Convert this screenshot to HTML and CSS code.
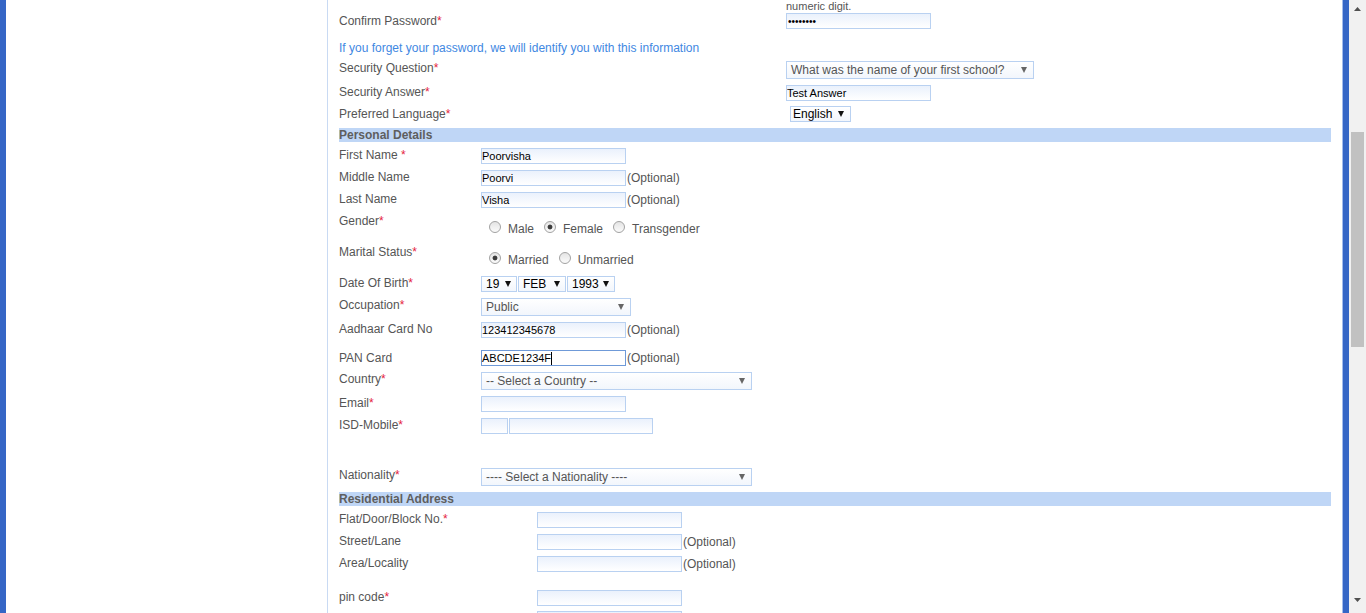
FILE: index.html
```html
<!DOCTYPE html>
<html lang="en">
<head>
<meta charset="utf-8">
<title>Registration</title>
<link rel="stylesheet" href="styles.css">
</head>
<body>
<div class="page">
  <div class="edge-left"></div>
  <div class="main">
    <div class="panel">
      <div class="sec sec-top">
        <div class="row h10"><div class="lbl"></div><div class="hint">numeric digit.</div></div>
        <div class="row h27"><div class="lbl">Confirm Password<span class="req">*</span></div><div class="ctl m3"><input class="txt pwd" type="password" value="12345678"></div></div>
        <div class="row h20"><div class="info">If you forget your password, we will identify you with this information</div></div>
        <div class="row h24"><div class="lbl">Security Question<span class="req">*</span></div><div class="ctl m4"><div class="sel w-secq"><span>What was the name of your first school?</span><i class="arr"></i></div></div></div>
        <div class="row h22"><div class="lbl">Security Answer<span class="req">*</span></div><div class="ctl m4"><input class="txt" value="Test Answer"></div></div>
        <div class="row h25"><div class="lbl">Preferred Language<span class="req">*</span></div><div class="ctl m3"><div class="sel dark w-lang"><span>English</span><i class="arr"></i></div></div></div>
      </div>

      <div class="bar">Personal Details</div>
      <div class="sec sec-personal">
        <div class="row h22"><div class="lbl">First Name <span class="req">*</span></div><div class="ctl m4"><input class="txt" value="Poorvisha"></div></div>
        <div class="row h22"><div class="lbl">Middle Name</div><div class="ctl m4"><input class="txt" value="Poorvi"><span class="opt">(Optional)</span></div></div>
        <div class="row h22"><div class="lbl">Last Name</div><div class="ctl m4"><input class="txt" value="Visha"><span class="opt">(Optional)</span></div></div>
        <div class="row h31"><div class="lbl">Gender<span class="req">*</span></div>
          <div class="ctl m11 radios">
            <label class="choice"><input class="rad" type="radio" name="g">Male</label>
            <label class="choice"><input class="rad" type="radio" name="g" checked>Female</label>
            <label class="choice"><input class="rad" type="radio" name="g">Transgender</label>
          </div>
        </div>
        <div class="row h31"><div class="lbl">Marital Status<span class="req">*</span></div>
          <div class="ctl m11 radios">
            <label class="choice"><input class="rad" type="radio" name="m" checked>Married</label>
            <label class="choice"><input class="rad" type="radio" name="m">Unmarried</label>
          </div>
        </div>
        <div class="row h22"><div class="lbl">Date Of Birth<span class="req">*</span></div>
          <div class="ctl m4 dob">
            <div class="sel dark small w-day"><span>19</span><i class="arr"></i></div>
            <div class="sel dark small w-mon"><span>FEB</span><i class="arr"></i></div>
            <div class="sel dark small w-yr"><span>1993</span><i class="arr"></i></div>
          </div>
        </div>
        <div class="row h24"><div class="lbl">Occupation<span class="req">*</span></div><div class="ctl m4"><div class="sel w-occ"><span>Public</span><i class="arr"></i></div></div></div>
        <div class="row h29"><div class="lbl">Aadhaar Card No</div><div class="ctl m4"><input class="txt" value="123412345678"><span class="opt">(Optional)</span></div></div>
        <div class="row h21"><div class="lbl">PAN Card</div><div class="ctl m3"><div class="txt focus">ABCDE1234F<span class="caret"></span></div><span class="opt">(Optional)</span></div></div>
        <div class="row h24"><div class="lbl">Country<span class="req">*</span></div><div class="ctl m4"><div class="sel w-wide"><span>-- Select a Country --</span><i class="arr"></i></div></div></div>
        <div class="row h22"><div class="lbl">Email<span class="req">*</span></div><div class="ctl m4"><input class="txt" value=""></div></div>
        <div class="row h50"><div class="lbl">ISD-Mobile<span class="req">*</span></div><div class="ctl m4"><input class="txt isd" value=""><input class="txt mob" value=""></div></div>
        <div class="row h28"><div class="lbl">Nationality<span class="req">*</span></div><div class="ctl m4"><div class="sel w-wide"><span>---- Select a Nationality ----</span><i class="arr"></i></div></div></div>
      </div>

      <div class="bar">Residential Address</div>
      <div class="sec sec-address">
        <div class="row h22"><div class="lbl">Flat/Door/Block No.<span class="req">*</span></div><div class="ctl m4"><input class="txt" value=""></div></div>
        <div class="row h22"><div class="lbl">Street/Lane</div><div class="ctl m4"><input class="txt" value=""><span class="opt">(Optional)</span></div></div>
        <div class="row h34"><div class="lbl">Area/Locality</div><div class="ctl m4"><input class="txt" value=""><span class="opt">(Optional)</span></div></div>
        <div class="row h21"><div class="lbl">pin code<span class="req">*</span></div><div class="ctl m4"><input class="txt" value=""></div></div>
        <div class="row h22"><div class="lbl"></div><div class="ctl m4"><input class="txt" value=""></div></div>
      </div>
    </div>
  </div>
  <div class="edge-right"></div>
  <div class="scrollbar">
    <div class="sb-btn"><svg width="7" height="4" viewBox="0 0 7 4"><path d="M0 4L3.5 0L7 4Z" fill="#505050"/></svg></div>
    <div class="sb-track"><div class="sb-thumb"></div></div>
    <div class="sb-btn down"><svg width="7" height="4" viewBox="0 0 7 4"><path d="M0 0L3.5 4L7 0Z" fill="#505050"/></svg></div>
  </div>
</div>
</body>
</html>
```

FILE: styles.css
```css
html, body {
  margin: 0;
  padding: 0;
  height: 613px;
  overflow: hidden;
  background: #fff;
}
body {
  font-family: "Liberation Sans", Arial, sans-serif;
  font-size: 12px;
  color: #555;
}
.page {
  display: flex;
  height: 613px;
  overflow: hidden;
}
.edge-left {
  flex: none;
  width: 6px;
  background: #3566c6;
}
.main {
  flex: 1;
  min-width: 0;
  display: flex;
  background: #fff;
}
.panel {
  flex: 1;
  min-width: 0;
  margin-left: 321px;
  border-left: 1px solid #c9daf3;
  padding: 0 11px;
}
.edge-right {
  flex: none;
  width: 6px;
  border-left: 1px solid #a3bcec;
  background: #3566c6;
}
.scrollbar {
  flex: none;
  width: 17px;
  background: #f1f1f1;
  display: flex;
  flex-direction: column;
}
.sb-btn {
  height: 17px;
  display: flex;
  align-items: center;
  justify-content: center;
}
.sb-btn.down {
  height: 15px;
  align-items: flex-start;
}
.sb-track {
  flex: 1;
}
.sb-thumb {
  margin: 115px 2px 0 2px;
  height: 215px;
  background: #c1c1c1;
}

/* rows */
.row {
  display: flex;
  align-items: flex-start;
  overflow: visible;
}
.h10 { height: 10px; }
.h20 { height: 20px; }
.h21 { height: 21px; }
.h22 { height: 22px; }
.h24 { height: 24px; }
.h25 { height: 25px; }
.h27 { height: 27px; }
.h28 { height: 28px; }
.h29 { height: 29px; }
.h31 { height: 31px; }
.h34 { height: 34px; }
.h50 { height: 50px; }

.lbl {
  flex: none;
  margin-top: 3px;
  line-height: 16px;
  white-space: nowrap;
}
.sec-top .lbl { width: 447px; }
.sec-personal .lbl { width: 142px; }
.sec-address .lbl { width: 198px; }

.req { color: #e5233d; }

.hint {
  font-size: 11px;
  line-height: 13px;
  color: #555;
}
.info {
  margin-top: 3px;
  line-height: 16px;
  color: #3f88e2;
}

.ctl {
  display: flex;
  align-items: center;
}
.m3 { margin-top: 3px; }
.m4 { margin-top: 4px; }
.m11 { margin-top: 11px; }

.opt {
  line-height: 16px;
  margin-left: 1px;
}

/* text inputs */
.txt {
  box-sizing: border-box;
  width: 145px;
  height: 16px;
  margin: 0;
  padding: 0;
  border: 1px solid #b9d1f1;
  border-radius: 0;
  background: linear-gradient(#eaf1fc, #ffffff);
  font-family: "Liberation Sans", Arial, sans-serif;
  font-size: 11px;
  color: #000;
  outline: none;
}
.pwd {
  font-size: 10px;
  padding-left: 1px;
}
.txt.focus {
  display: flex;
  align-items: center;
  line-height: 14px;
  border-color: #6f9ad8;
  background: #fff;
}
.caret {
  display: inline-block;
  width: 1px;
  height: 13px;
  background: #000;
}
.txt.isd { width: 27px; }
.txt.mob { width: 144px; margin-left: 1px; }

/* radios */
.radios {
  align-items: flex-start;
  padding-left: 8px;
}
.choice {
  display: inline-flex;
  align-items: flex-start;
  line-height: 16px;
  margin-right: 10px;
}
.rad {
  -webkit-appearance: none;
  appearance: none;
  box-sizing: border-box;
  width: 12px;
  height: 12px;
  margin: 0 7px 0 0;
  border: 1px solid #a2a2a2;
  border-radius: 50%;
  background: linear-gradient(#e4e4e4, #fbfbfb);
}
.rad:checked {
  background: radial-gradient(circle, #3c3c3c 0, #3c3c3c 2px, rgba(60,60,60,0) 2.8px), linear-gradient(#e4e4e4, #fbfbfb);
}

/* select look-alikes */
.sel {
  box-sizing: border-box;
  height: 18px;
  display: flex;
  align-items: center;
  justify-content: space-between;
  border: 1px solid #b9d1f1;
  background: linear-gradient(#ffffff, #f2f6fc);
  padding: 0 6px 0 4px;
  color: #555;
  font-size: 12px;
  line-height: 14px;
  white-space: nowrap;
}
.sel.dark { color: #000; }
.arr {
  display: inline-block;
  width: 0;
  height: 0;
  border-left: 3.5px solid transparent;
  border-right: 3.5px solid transparent;
  border-top: 6px solid #666;
}
.sel.dark .arr { border-top-color: #111; }
.w-secq { width: 248px; }
.w-lang { width: 61px; height: 16px; margin-left: 4px; padding: 0 6px 0 2px; }
.w-occ { width: 150px; }
.w-wide { width: 271px; }
.small { height: 16px; padding-right: 5px; }
.w-day { width: 36px; }
.w-mon { width: 48px; margin-left: 1px; }
.w-yr { width: 48px; margin-left: 1px; }

/* section bars */
.bar {
  height: 14px;
  line-height: 14px;
  background: #bfd6f6;
  font-weight: bold;
  color: #5e5e5e;
  margin-bottom: 2px;
  white-space: nowrap;
}
```
